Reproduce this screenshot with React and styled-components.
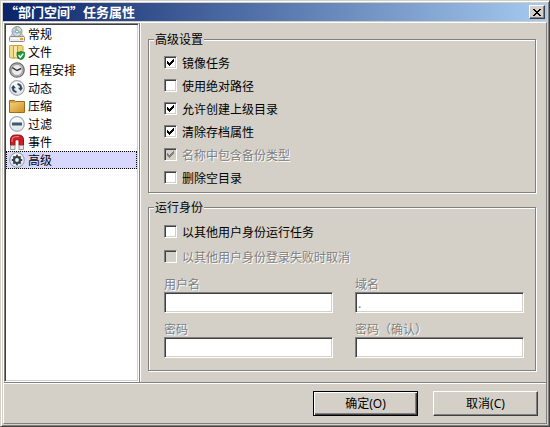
import React, { useState } from 'react';
import styled, { createGlobalStyle, css } from 'styled-components';

const FACE = '#d4d0c8';
const SHADOW = '#808080';
const DARK = '#404040';

const GlobalStyle = createGlobalStyle`
  * {
    box-sizing: border-box;
  }

  body {
    margin: 0;
    background: ${FACE};
    color: #000;
    font: 12px/16px "Noto Sans CJK SC", "Noto Sans", sans-serif;
  }

  button,
  input {
    font: inherit;
    color: inherit;
  }
`;

const sunken = css`
  border: 1px solid;
  border-color: ${SHADOW} #fff #fff ${SHADOW};
  box-shadow: inset 1px 1px 0 ${DARK}, inset -1px -1px 0 ${FACE};
`;

const raised = css`
  border: 1px solid;
  border-color: #fff ${DARK} ${DARK} #fff;
  box-shadow: inset -1px -1px 0 ${SHADOW};
`;

const Dialog = styled.div`
  display: flex;
  flex-direction: column;
  min-height: 100vh;
  padding: 2px;
  background: ${FACE};
  border: 1px solid;
  border-color: ${FACE} ${DARK} ${DARK} ${FACE};
  box-shadow: inset 1px 1px 0 #fff, inset -1px -1px 0 ${SHADOW};
`;

const TitleBar = styled.header`
  display: flex;
  align-items: center;
  justify-content: space-between;
  height: 18px;
  margin-bottom: 1px;
  padding: 0 2px;
  background: linear-gradient(to right, #0a246a, #a6caf0);
`;

const Title = styled.h1`
  margin: 0;
  color: #fff;
  font-size: 13px;
  font-weight: bold;
  line-height: 18px;
`;

const CloseButton = styled.button`
  ${raised}
  display: flex;
  align-items: center;
  justify-content: center;
  width: 16px;
  height: 14px;
  padding: 0;
  background: ${FACE};
`;

const Client = styled.div`
  flex: 1;
  display: flex;
  flex-direction: column;
  border: 1px solid;
  border-color: #fff ${SHADOW} ${SHADOW} #fff;
`;

const Main = styled.div`
  flex: 1;
  display: flex;
`;

const Sidebar = styled.nav`
  ${sunken}
  flex: none;
  width: 135px;
  padding: 1px;
  background: #fff;
`;

const PageList = styled.ul`
  margin: 0;
  padding: 0;
  list-style: none;
`;

const PageButton = styled.button`
  display: flex;
  align-items: center;
  gap: 3px;
  width: 100%;
  height: 18px;
  padding: 0 2px;
  border: 1px dotted ${({ $active }) => ($active ? '#000' : 'transparent')};
  background: ${({ $active }) => ($active ? '#d8d8ff' : 'transparent')};
  line-height: 16px;
  outline: none;
`;

const Panel = styled.main`
  flex: 1;
  padding: 8px 10px 10px 8px;
  border-left: 1px solid ${SHADOW};
  box-shadow: inset 1px 0 0 #fff;
`;

const Group = styled.fieldset`
  min-width: 0;
  margin: 0 0 6px;
  padding: 4px 11px ${({ $roomy }) => ($roomy ? 12 : 3)}px 15px;
  border: 1px solid ${SHADOW};
  box-shadow: 1px 1px 0 #fff, inset 1px 1px 0 #fff;

  &:last-child {
    margin-bottom: 0;
  }
`;

const Legend = styled.legend`
  margin-left: -10px;
  padding: 0 1px;
  background: ${FACE};
  line-height: 16px;
`;

const embossed = css`
  color: ${SHADOW};
  text-shadow: 1px 1px 0 #fff;
`;

const CheckRow = styled.label`
  display: flex;
  align-items: center;
  gap: 5px;
  height: ${({ $tall }) => ($tall ? 25 : 23)}px;
  ${({ $disabled }) => $disabled && embossed}
`;

const CheckBox = styled.span`
  position: relative;
  display: flex;
  width: 13px;
  height: 13px;

  svg {
    position: absolute;
    top: 3px;
    left: 3px;
    pointer-events: none;
  }
`;

const CheckInput = styled.input`
  ${sunken}
  appearance: none;
  width: 13px;
  height: 13px;
  margin: 0;
  background: #fff;

  &:disabled {
    background: ${FACE};
  }
`;

const Fields = styled.div`
  display: grid;
  grid-template-columns: 1fr 1fr;
  gap: 7px 22px;
  margin-top: 6px;
`;

const Field = styled.div`
  display: flex;
  flex-direction: column;
`;

const FieldLabel = styled.label`
  ${embossed}
  line-height: 17px;
`;

const TextInput = styled.input`
  ${sunken}
  width: 100%;
  height: 21px;
  padding: 0 2px;
  background: #fff;
  color: ${SHADOW};
`;

const Footer = styled.footer`
  display: flex;
  justify-content: flex-end;
  gap: 15px;
  padding: 8px 8px 7px;
  border-top: 1px solid ${SHADOW};
  box-shadow: inset 0 1px 0 #fff;
`;

const PushButton = styled.button`
  ${raised}
  width: 105px;
  height: 25px;
  padding: 0;
  background: ${FACE};
  ${({ $default }) =>
    $default &&
    css`
      border-color: #000;
      box-shadow: inset 1px 1px 0 #fff, inset -1px -1px 0 ${DARK},
        inset -2px -2px 0 ${SHADOW};
    `}
`;

const AccessKey = styled.span`
  font-family: "Noto Sans", sans-serif;
`;

const Icon = ({ children }) => (
  <svg width="16" height="16" viewBox="0 0 16 16" aria-hidden="true">
    {children}
  </svg>
);

const Disc = () => (
  <>
    <defs>
      <linearGradient id="disc" x1="0" y1="0" x2="0" y2="1">
        <stop offset="0" stopColor="#fff" />
        <stop offset="1" stopColor="#dbe3ea" />
      </linearGradient>
    </defs>
    <circle cx="8" cy="8" r="7.3" fill="url(#disc)" stroke="#a3abb2" strokeWidth="1.2" />
  </>
);

const DriveIcon = () => (
  <Icon>
    <path d="M1 11 3.500 7.500h9L15 11z" fill="#e4e4e4" stroke="#a5a5a5" />
    <circle cx="8" cy="5.500" r="5" fill="#d5dadd" stroke="#8d9296" />
    <path d="M8 5.500 4.500 2A5 5 0 0 1 8 .8z" fill="#a3c79a" />
    <path d="M8 5.500 12 8.500A5 5 0 0 0 12.700 5z" fill="#8fc596" />
    <path d="M8 5.500 3.500 8A5 5 0 0 1 3.400 4z" fill="#a7b6e2" />
    <circle cx="8" cy="5.500" r="1.500" fill="#fff" stroke="#6b8fa8" strokeWidth=".9" />
    <rect x=".5" y="10.500" width="15" height="5" rx="1" fill="#ececec" stroke="#8c8c8c" />
    <path d="M2 12.500h8" stroke="#fff" />
    <rect x="11" y="12" width="3" height="2" fill="#f39a25" />
  </Icon>
);

const FilesIcon = () => (
  <Icon>
    <path d="M.5 1.500h4l1 1v12l-5-1z" fill="#f4dc8c" stroke="#d0a850" />
    <path d="M4.500 1.500h4l1 1v12l-5-1z" fill="#f9e8ac" stroke="#c99c35" />
    <path d="M8.500 1.500h4.500l1 1v12H8.500z" fill="#f4d67a" stroke="#c99c35" />
    <path d="M8 8.300q3 0 4-1 .8 1 3.700 1v3.300q-.5 3-3.700 4.200Q8.300 14.600 8 11.600z" fill="#159a3a" stroke="#0b7428" strokeWidth=".7" />
    <path d="m9.600 11.300 1.700 2 2.900-3.700" fill="none" stroke="#fff" strokeWidth="1.500" />
  </Icon>
);

const ClockIcon = () => (
  <Icon>
    <circle cx="8" cy="8" r="7.200" fill="#bcbcbc" stroke="#707070" strokeWidth="1.300" />
    <circle cx="8" cy="8" r="5.500" fill="#ececec" stroke="#929292" strokeWidth=".8" />
    <path d="m3.300 5.700 4.700 2.800 4.200-2" fill="none" stroke="#333" strokeWidth="1.400" />
  </Icon>
);

const SyncIcon = () => (
  <Icon>
    <Disc />
    <path d="M7.500 12A4.200 4.200 0 0 1 4 7.600M8.500 4A4.200 4.200 0 0 1 12 8.400" fill="none" stroke="#34475b" strokeWidth="2" />
    <path d="M2 8.300 4.300 5l2.700 3.300zM9 7.700h5L11.700 11z" fill="#34475b" />
  </Icon>
);

const FolderIcon = () => (
  <Icon>
    <defs>
      <linearGradient id="folder" x1="0" y1="0" x2="1" y2="1">
        <stop offset="0" stopColor="#f6d27a" />
        <stop offset="1" stopColor="#cf9026" />
      </linearGradient>
    </defs>
    <path d="M.5 2.500h5l1 1h9v11H.5z" fill="#d9a340" stroke="#9c6c1c" />
    <path d="M1 5h5l1-1h8v10H1z" fill="url(#folder)" />
  </Icon>
);

const MinusIcon = () => (
  <Icon>
    <Disc />
    <rect x="3" y="6.500" width="10" height="3" rx=".5" fill="#43586b" />
  </Icon>
);

const MagnetIcon = () => (
  <Icon>
    <path d="M1.500 11.500V6Q1.500 1 6.500 1h3q5 0 5 5v5.500H10V7q0-1.200-1.200-1.200H7.200Q6 5.800 6 7v4.500z" fill="#cf1f25" stroke="#8e1115" />
    <path d="M3 8V6q0-3.300 3.500-3.300H10" fill="none" stroke="#f08582" />
    <path d="M1.500 11.500H6v4H1.500zM10 11.500h4.500v4H10z" fill="#e8e8e8" stroke="#9a9a9a" />
  </Icon>
);

const GearIcon = () => (
  <Icon>
    <Disc />
    <circle cx="8" cy="8" r="3" fill="none" stroke="#35414d" strokeWidth="2.200" />
    <path
      d="M8 2.800v2M8 11.200v2M2.800 8h2M11.200 8h2M4.300 4.300l1.400 1.400M10.300 10.300l1.400 1.400M11.700 4.300l-1.400 1.400M5.700 10.300l-1.400 1.400"
      stroke="#35414d"
      strokeWidth="1.800"
    />
  </Icon>
);

const CheckMark = () => (
  <svg width="7" height="7" viewBox="0 0 7 7" shapeRendering="crispEdges" aria-hidden="true">
    <path d="M0 2h1v1h1v1h1V3h1V2h1V1h1V0h1v3H6v1H5v1H4v1H3v1H2V6H1V5H0z" fill="currentColor" />
  </svg>
);

const CloseMark = () => (
  <svg width="8" height="7" viewBox="0 0 8 7" shapeRendering="crispEdges" aria-hidden="true">
    <path d="M0 0h2v1h1v1h2V1h1V0h2v1H7v1H6v1H5v1h1v1h1v1h1v1H6V6H5V5H3v1H2v1H0V6h1V5h1V4h1V3H2V2H1V1H0z" />
  </svg>
);

const pages = [
  { name: '常规', icon: <DriveIcon /> },
  { name: '文件', icon: <FilesIcon /> },
  { name: '日程安排', icon: <ClockIcon /> },
  { name: '动态', icon: <SyncIcon /> },
  { name: '压缩', icon: <FolderIcon /> },
  { name: '过滤', icon: <MinusIcon /> },
  { name: '事件', icon: <MagnetIcon /> },
  { name: '高级', icon: <GearIcon /> },
];

const settings = [
  { label: '镜像任务', checked: true },
  { label: '使用绝对路径' },
  { label: '允许创建上级目录', checked: true },
  { label: '清除存档属性', checked: true },
  { label: '名称中包含备份类型', checked: true, disabled: true },
  { label: '删除空目录' },
];

const fields = [
  { id: 'user', label: '用户名', type: 'text' },
  { id: 'domain', label: '域名', type: 'text', value: '.' },
  { id: 'password', label: '密码', type: 'password' },
  { id: 'confirm', label: '密码（确认）', type: 'password' },
];

const Check = ({ label, checked = false, disabled, tall }) => {
  const [on, setOn] = useState(checked);

  return (
    <CheckRow $disabled={disabled} $tall={tall}>
      <CheckBox>
        <CheckInput
          type="checkbox"
          checked={on}
          disabled={disabled}
          onChange={(e) => setOn(e.target.checked)}
        />
        {on && <CheckMark />}
      </CheckBox>
      {label}
    </CheckRow>
  );
};

const App = () => {
  const [active, setActive] = useState('高级');

  return (
    <Dialog role="dialog" aria-labelledby="title" lang="zh-CN">
      <GlobalStyle />
      <TitleBar>
        <Title id="title">“部门空间”任务属性</Title>
        <CloseButton type="button" aria-label="关闭">
          <CloseMark />
        </CloseButton>
      </TitleBar>
      <Client>
        <Main>
          <Sidebar>
            <PageList>
              {pages.map(({ name, icon }) => (
                <li key={name}>
                  <PageButton
                    type="button"
                    $active={name === active}
                    onClick={() => setActive(name)}
                  >
                    {icon}
                    {name}
                  </PageButton>
                </li>
              ))}
            </PageList>
          </Sidebar>
          <Panel>
            <Group>
              <Legend>高级设置</Legend>
              {settings.map((item) => (
                <Check key={item.label} {...item} />
              ))}
            </Group>
            <Group $roomy>
              <Legend>运行身份</Legend>
              <Check label="以其他用户身份运行任务" tall />
              <Check label="以其他用户身份登录失败时取消" disabled tall />
              <Fields>
                {fields.map(({ id, label, type, value }) => (
                  <Field key={id}>
                    <FieldLabel htmlFor={id}>{label}</FieldLabel>
                    <TextInput id={id} type={type} defaultValue={value} disabled />
                  </Field>
                ))}
              </Fields>
            </Group>
          </Panel>
        </Main>
        <Footer>
          <PushButton type="submit" $default>
            确定<AccessKey>(O)</AccessKey>
          </PushButton>
          <PushButton type="button">
            取消<AccessKey>(C)</AccessKey>
          </PushButton>
        </Footer>
      </Client>
    </Dialog>
  );
};

export default App;
